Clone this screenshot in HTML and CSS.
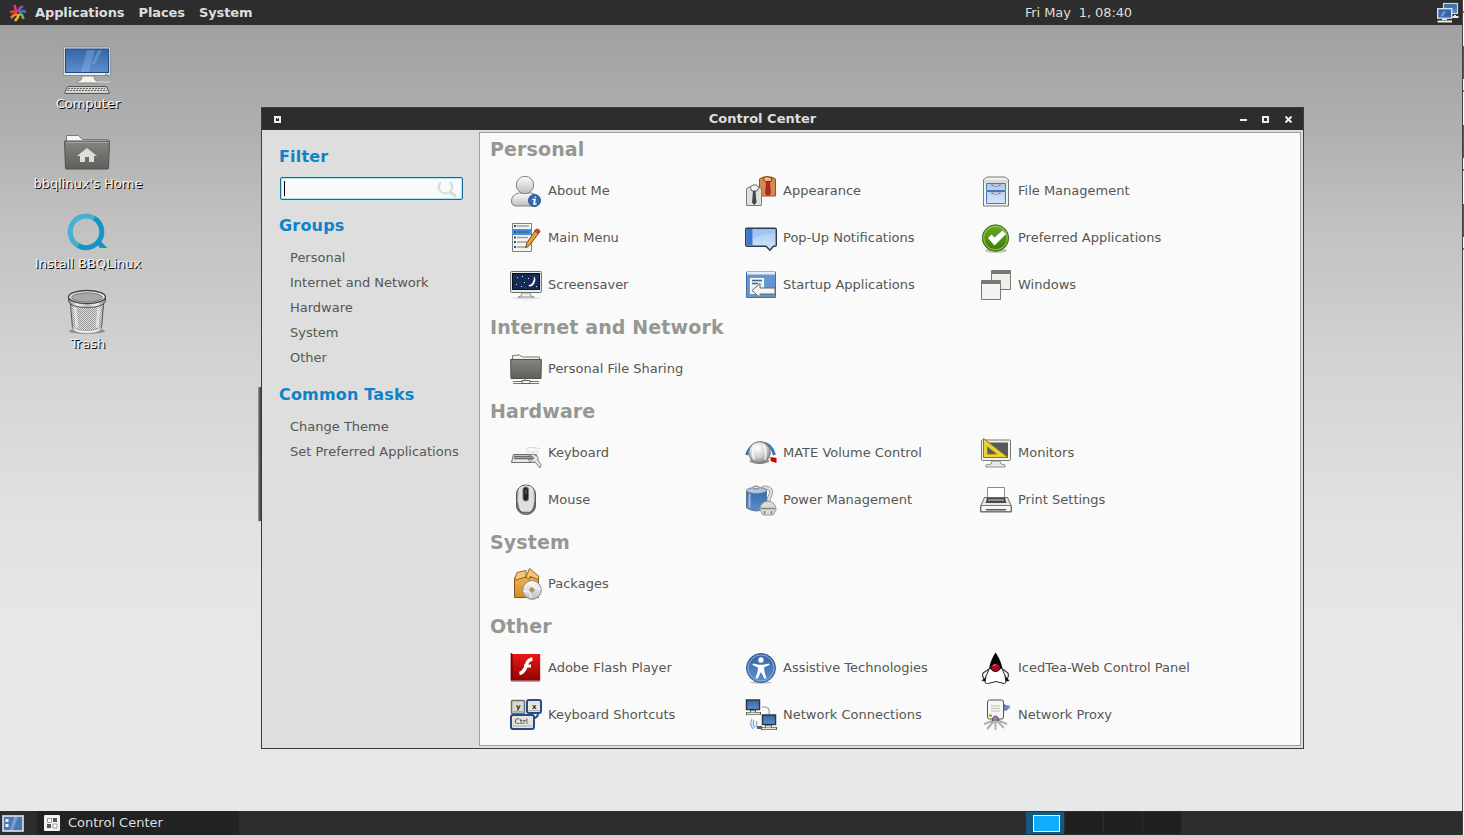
FILE: index.html
```html
<!DOCTYPE html>
<html lang="en">
<head>
<meta charset="utf-8">
<title>Control Center</title>
<link rel="stylesheet" href="styles.css">
</head>
<body>
<svg class="defs" width="0" height="0" aria-hidden="true">
  <defs>
    <linearGradient id="blue" x1="0" y1="0" x2="0" y2="1"><stop offset="0" stop-color="#3465a4"/><stop offset="1" stop-color="#5d8fce"/></linearGradient>
    <linearGradient id="lightblue" x1="0" y1="0" x2="0" y2="1"><stop offset="0" stop-color="#a9c8f0"/><stop offset="1" stop-color="#d3e4f8"/></linearGradient>
    <linearGradient id="steel" x1="0" y1="0" x2="0" y2="1"><stop offset="0" stop-color="#fdfdfd"/><stop offset="1" stop-color="#bdbdbb"/></linearGradient>
    <linearGradient id="metal" x1="0" y1="0" x2="1" y2="0"><stop offset="0" stop-color="#8a8a88"/><stop offset=".25" stop-color="#f4f4f4"/><stop offset=".5" stop-color="#bcbcbc"/><stop offset=".75" stop-color="#f0f0f0"/><stop offset="1" stop-color="#8b8b89"/></linearGradient>
    <radialGradient id="knob" cx=".4" cy=".3" r=".7"><stop offset="0" stop-color="#fff"/><stop offset=".6" stop-color="#cfcfcd"/><stop offset="1" stop-color="#858583"/></radialGradient>
    <linearGradient id="folder" x1="0" y1="0" x2="0" y2="1"><stop offset="0" stop-color="#83857f"/><stop offset="1" stop-color="#5d5f5a"/></linearGradient>
    <linearGradient id="red" x1="0" y1="0" x2="0" y2="1"><stop offset="0" stop-color="#f01515"/><stop offset="1" stop-color="#8e0505"/></linearGradient>
    <linearGradient id="green" x1="0" y1="0" x2="0" y2="1"><stop offset="0" stop-color="#6cab2c"/><stop offset="1" stop-color="#3c7a05"/></linearGradient>
    <linearGradient id="box" x1="0" y1="0" x2="0" y2="1"><stop offset="0" stop-color="#efb04f"/><stop offset="1" stop-color="#d18b28"/></linearGradient>
    <pattern id="mesh" width="2" height="2" patternUnits="userSpaceOnUse"><rect width="2" height="2" fill="#dedede"/><path d="M0 0h1v1H0zM1 1h1v1H1z" fill="#979797"/></pattern>
  </defs>
</svg>

<div class="screen">
  <header class="top-panel">
    <svg class="menu-logo" viewBox="0 0 18 18" fill="none" stroke-width="2.6">
      <path d="M9 8L6.500 5 5.500 1" stroke="#e0397f"/><path d="M10 8l1-4 3-2" stroke="#a14ea8"/>
      <path d="M10 9l4-2 3 1" stroke="#3f75c4"/><path d="M10 10l3 1 1.500 4" stroke="#7db543"/>
      <path d="M9 10l0 3-3 4" stroke="#f5b32f"/><path d="M8 10l-3 1-3 3" stroke="#f07c28"/><path d="M8 9L5 7.500 1 8" stroke="#dc4238"/>
    </svg>
    <nav class="menus"><span>Applications</span><span>Places</span><span>System</span></nav>
    <time class="clock">Fri May&nbsp; 1, 08:40</time>
    <svg class="tray" viewBox="0 0 22 22">
      <path d="M15.500 15h6M18 13v2" stroke="#eee" stroke-width="2"/><rect x="6.500" y="1.500" width="14" height="10" fill="url(#blue)" stroke="#d5d5d0" stroke-width="1.200"/>
      <rect x=".7" y="6.700" width="14" height="9.500" fill="#3465a4" stroke="#dfe9f4" stroke-width="1.300"/><path d="M3 14.500l3-5h3l-3 5z" fill="#6f9ad1"/><path d="M.5 19.500h14.500" stroke="#eee" stroke-width="2"/><path d="M5 17.500h5" stroke="#eee"/>
    </svg>
  </header>

  <main class="desktop">
    <div class="launchers">
      <div class="launcher">
        <svg viewBox="0 0 48 48">
          <rect x=".7" y="1" width="46.600" height="28.500" rx="1" fill="#ebece7" stroke="#888a85"/><rect x="2.500" y="3" width="43" height="23.500" fill="url(#blue)" stroke="#204a87"/>
          <path d="M18 26L24 4h8l-6 22zM29 18L35 4h4l-7 14z" fill="#9bbce5" opacity=".35"/><path d="M42 28.200h3" stroke="#6ca33c"/>
          <path d="M19 30h12l1 4 3 1.500V37H14v-1.500l4-1.500z" fill="#f1f1ee" stroke="#777" stroke-width=".8"/><path d="M34 36h13" stroke="#ddd" fill="none"/>
          <path d="M5 40.500h38l3 5v2H2v-2z" fill="#d3d4d0" stroke="#555753"/><path d="M5 42.500h37M4 44.500h40" stroke="#6b6b69" stroke-dasharray="2 1"/>
        </svg>
        <span>Computer</span>
      </div>
      <div class="launcher">
        <svg viewBox="0 0 48 48">
          <path d="M3.500 15V9.500h12l4 4h25V20h-41z" fill="#f5f5f2" stroke="#777974"/><path d="M1.500 15h45l-1 27q0 1-1 1h-41q-1 0-1-1z" fill="url(#folder)" stroke="#50524e"/>
          <path d="M24 22l10 8h-3v6h-5v-5h-4v5h-5v-6h-3z" fill="#dededb"/><path d="M2.500 16.500h43" stroke="#a3a59f"/>
        </svg>
        <span>bbqlinux's Home</span>
      </div>
      <div class="launcher low">
        <svg viewBox="0 0 48 48" fill="none" stroke-width="5">
          <path d="M15 36.500A15 15 0 1 1 31 9.200" stroke="#47afd2"/><path d="M31 9.200A15 15 0 0 1 15 36.500" stroke="#1095c7"/><path d="M33 34l4 5h7.500l-6-6z" fill="#1095c7"/>
        </svg>
        <span>Install BBQLinux</span>
      </div>
      <div class="launcher low">
        <svg viewBox="0 0 48 48">
          <ellipse cx="24" cy="42" rx="18" ry="3" fill="#555" opacity=".5"/><path d="M7 10l2.500 29q1 5 14.500 5t14.500-5L41 10z" fill="url(#mesh)" stroke="#565656"/>
          <path d="M9.500 37.500q3 4 14.500 4t14.500-4l-.5 3q-3 4-14 4t-14-4z" fill="#f0f0f0" stroke="#888" stroke-width=".6"/><path d="M5.500 7.500v5q3 6 18.500 6t18.500-6v-5z" fill="url(#metal)" stroke="#555"/>
          <ellipse cx="24" cy="8" rx="18.500" ry="6.500" fill="#e9e9e9" stroke="#444" stroke-width="1.300"/><ellipse cx="24" cy="8.500" rx="15.500" ry="4.600" fill="#a8a8a6" stroke="#777"/><path d="M12 18l2 21M36 18l-2 21" stroke="#fff" opacity=".5" stroke-width="3"/>
        </svg>
        <span>Trash</span>
      </div>
    </div>
  </main>

  <footer class="bottom-panel">
    <svg class="show-desktop" viewBox="0 0 22 17"><rect x="1" y="1" width="20" height="15" fill="#4b78b8" stroke="#d8dde2" stroke-width="1.700"/><path d="M8 15L12 2h4L11 15z" fill="#8bacd9" opacity=".7"/><path d="M3.500 4h3v3h-3zM3.500 9h3v3h-3z" fill="#eef3fa"/></svg>
    <div class="task">
      <svg viewBox="0 0 16 16"><rect width="16" height="16" rx="1" fill="#f4f4f1"/><path d="M3.500 3.500h4v4h-4zM9 9h4v4H9z" fill="#fff" stroke="#999"/><path d="M9 3h4v4H9zM3 9h4v4H3z" fill="#555753"/></svg>
      <span>Control Center</span>
    </div>
    <div class="workspaces"><div class="workspace active"><i></i></div><div class="workspace"></div><div class="workspace"></div><div class="workspace"></div></div>
  </footer>
  <div class="edge-strip"></div>

  <div class="hidden-window"></div>
  <section class="window">
    <div class="titlebar">
      <svg class="window-menu" viewBox="0 0 7 7"><path d="M0 0h7v7H0zM2 2v3h3V2z" fill="#eee" fill-rule="evenodd"/><path d="M3 2h1v1H3z" fill="#eee"/></svg>
      <h1>Control Center</h1>
      <div class="controls">
        <svg viewBox="0 0 7 7"><path d="M0 3h7v2H0z" fill="#eee"/></svg>
        <svg viewBox="0 0 7 7"><path d="M0 0h7v7H0zM2 2v3h3V2z" fill="#eee" fill-rule="evenodd"/></svg>
        <svg viewBox="0 0 7 7"><path d="M.5.500l6 6M6.500.500l-6 6" stroke="#eee" stroke-width="2"/></svg>
      </div>
    </div>
    <div class="window-body">
      <aside class="sidebar">
        <h2>Filter</h2>
        <div class="search"><i class="caret"></i><svg viewBox="0 0 22 18" fill="none" stroke="#d5dcdd" stroke-width="2"><path d="M5 2q-3 3-2 6.500 2 5 6.500 5t6.500-5q1-3.500-2-6.500"/><path d="M14 12l6 4.500" stroke-width="3"/></svg></div>
        <h2 class="groups">Groups</h2>
        <ul><li>Personal</li><li>Internet and Network</li><li>Hardware</li><li>System</li><li>Other</li></ul>
        <h2 class="tasks">Common Tasks</h2>
        <ul><li>Change Theme</li><li>Set Preferred Applications</li></ul>
      </aside>
      <div class="content">
        <section class="group">
          <h3>Personal</h3>
          <div class="grid">
            <div class="item"><svg viewBox="0 0 32 32"><path d="M1.500 26q0-6 7-8h13q7 2 7 8 0 5-5 5h-17q-5 0-5-5z" fill="url(#steel)" stroke="#80827d"/><circle cx="15" cy="10" r="8.700" fill="url(#steel)" stroke="#80827d"/><circle cx="24.500" cy="25.500" r="6" fill="#3768b0" stroke="#244f90"/><path d="M25.500 22h.1M23 24.500h2l-1 4.500h2" stroke="#fff" stroke-width="1.600" fill="none" stroke-linecap="round"/></svg><span>About Me</span></div>
            <div class="item"><svg viewBox="0 0 32 32"><path d="M14.500 4l4-2h8l4 2v17h-16z" fill="#d68a4c" stroke="#995018"/><path d="M18 3l4-1.500L27 3l-1 3.500h-6z" fill="#efb781" stroke="#7f4112"/><path d="M21.500 6.500h3l1 12-2.500 2-2.500-2z" fill="#b7252b" stroke="#83171b" stroke-width=".6"/><path d="M1.500 13.500l4-2h6l5 2v17h-15z" fill="#dfe0de" stroke="#7c7f7a"/><path d="M5 12l3-2h3l3 2-2 4H7z" fill="#f4f4f2" stroke="#646661"/><path d="M8 16h2.500l1 11.500L9.300 30 7 27.500z" fill="#44474a"/></svg><span>Appearance</span></div>
            <div class="item"><svg viewBox="0 0 32 32"><path d="M3.500 4.500l4-2.500h17l4 2.500v26.500h-25z" fill="#f1f1ee" stroke="#777b7c"/><path d="M4 5h24v3H4z" fill="#dadcd9"/><path d="M6.500 8.500h19v7h-19zM6.500 16.500h19v12h-19z" fill="url(#lightblue)" stroke="#4b79b5"/><path d="M12 9h8v1.500q-4 1.500-8 0zM12 17h8v1.500q-4 1.500-8 0z" fill="#fff" stroke="#5c6f85" stroke-width=".8"/></svg><span>File Management</span></div>
            <div class="item"><svg viewBox="0 0 32 32"><path d="M2.500 1.500h19v28h-19z" fill="#f5f5f1" stroke="#7e827e"/><path d="M2 7h20v6H2z" fill="#4e8ecc"/><path d="M7 4h12M7 15.500h11M7 20h10M7 25h8" stroke="#9aa1a4" stroke-width="1.300"/><path d="M4 4h2M4 10h2M4 15.500h2M4 20h2M4 25h2" stroke="#24588c" stroke-width="2"/><path d="M7 10h12" stroke="#265d94"/><path d="M15.500 26l1.500-5.500L26 7.500l3.500 2.500-10 13.500z" fill="#e7a33b" stroke="#7a4a12"/><path d="M24.500 9l2-2q3-.5 3.500 2.500l-2 2z" fill="#d2482f" stroke="#7a2114" stroke-width=".6"/></svg><span>Main Menu</span></div>
            <div class="item"><svg viewBox="0 0 32 32"><path transform="translate(0 -1.500)" d="M2 7.700h28q1.300 0 1.300 1.300v15.500q0 1.200-1.300 1.200h-1.500l-3.500 4-4-4H2Q.7 25.700.7 24.500V9q0-1.300 1.300-1.300z" fill="url(#lightblue)" stroke="#2e3b4e" stroke-width="1.400"/><path d="M1.500 7h6v16.500h-6z" fill="#3b78d4"/><path d="M8 16.500q10-5 22-5V7H8z" fill="#9dbfee" opacity=".7"/></svg><span>Pop-Up Notifications</span></div>
            <div class="item"><svg viewBox="0 0 32 32"><ellipse cx="16" cy="28.500" rx="11" ry="2.500" fill="#888" opacity=".5"/><circle cx="15.500" cy="16" r="13.200" fill="url(#green)" stroke="#41750f"/><circle cx="15.500" cy="16" r="11.800" fill="none" stroke="#99ca65"/><path d="M8 16l3.500-3.500 3 3 8-7L26 12 14.500 23.500z" fill="#fff"/></svg><span>Preferred Applications</span></div>
            <div class="item"><svg viewBox="0 0 32 32"><rect x=".6" y="2.500" width="30.800" height="21" rx="1" fill="#ecede8" stroke="#6b6e69"/><rect x="2.500" y="4.500" width="27" height="16" fill="#172b57" stroke="#080e20"/><path d="M24 7q3.500 5-2 10-2 1-4-.5 6-1 6-9.500z" fill="#f3f7ff"/><path d="M7 8h1v1H7zM12 7h1v1h-1zM6 15h1v1H6zM14 13h1v1h-1zM18 9h1v1h-1zM11 17h1v1h-1zM26 17h1v1h-1z" fill="#d4e3ff"/><ellipse cx="16" cy="29" rx="14" ry="1.500" fill="#bbb" opacity=".4"/><path d="M12 24h8l1 3 3 1H8l3-1z" fill="#eee" stroke="#7d807a" stroke-width=".8"/></svg><span>Screensaver</span></div>
            <div class="item"><svg viewBox="0 0 32 32"><path d="M1.500 3h29v25.500h-29z" fill="#6596d0" stroke="#436fa5"/><path d="M2 3h28v2.500H2z" fill="#e8eef4"/><path d="M5.500 9.500h13v15h-13z" fill="#e9eff7" stroke="#fff"/><path d="M7 11.500h10M7 14.500h6" stroke="#41658e" stroke-width="1.300"/><path d="M7 21.500l8-7v4.500h15v6H15v3.500z" fill="#f5f6f2" stroke="#686a66"/></svg><span>Startup Applications</span></div>
            <div class="item"><svg viewBox="0 0 32 32"><path d="M11.500 1.500h19v19h-19z" fill="#eeeeec" stroke="#777a75"/><path d="M12 2h18v3H12z" fill="#777974"/><path d="M1.500 11.500h19v19h-19z" fill="#f3f3f1" stroke="#777a75"/><path d="M2 12h18v3H2z" fill="#777974"/></svg><span>Windows</span></div>
          </div>
        </section>
        <section class="group">
          <h3>Internet and Network</h3>
          <div class="grid">
            <div class="item"><svg viewBox="0 0 32 32"><path d="M2.500 8V2.500l7-.5 3 2h17V8z" fill="#f2f2ef" stroke="#777974"/><path d="M.6 6.500h30.800L31 25.500H1z" fill="url(#folder)" stroke="#50524e"/><path d="M3 28.500h26M3 30.500h26M15 26v3" stroke="#777974"/><path d="M12 27.500h8v3h-8z" fill="#f4f4f2" stroke="#60625e"/></svg><span>Personal File Sharing</span></div>
          </div>
        </section>
        <section class="group">
          <h3>Hardware</h3>
          <div class="grid">
            <div class="item"><svg viewBox="0 0 32 32"><path d="M17 13q-2-3 5-2.500t8 1.500M16 15h13" stroke="#d5d5d3" fill="none"/><path d="M3.500 17.500h23l2 8h-27z" fill="#e9e9e7" stroke="#696b67"/><path d="M4 19.500h20M4 21.500h19" stroke="#696b67" stroke-width="1.500"/><path d="M19 18.500q4-3 7 0 3 2 2 5l3 4-1 3.500-5-6q-6 1-7-3l4 1 2-2-2-2z" fill="#e2e2e0" stroke="#898a87"/></svg><span>Keyboard</span></div>
            <div class="item"><svg viewBox="0 0 32 32"><path d="M1.500 18Q6 6 16 6q10 0 13.500 12" fill="none" stroke="#3e74b6" stroke-width="3"/><path d="M25.500 20l6 1v5l-6-2z" fill="#d40000"/><ellipse cx="14.500" cy="24" rx="10" ry="3" fill="#999"/><circle cx="14.500" cy="15.500" r="10.800" fill="url(#knob)" stroke="#777976"/><path d="M9 8q-2 8 0 15M19 8q3 7 1 15" stroke="#fff" stroke-width="2" fill="none" opacity=".7"/></svg><span>MATE Volume Control</span></div>
            <div class="item"><svg viewBox="0 0 32 32"><rect x="1.500" y="3" width="29" height="20.500" rx="1" fill="#f2f3ee" stroke="#777974"/><rect x="4" y="5.500" width="24" height="15" fill="#555a5d"/><path d="M12 24h8l1 3 4 1v2H6v-2l5-1z" fill="#e9e9e7" stroke="#777" stroke-width=".8"/><path d="M3.500 1.500v19h24.500zM7.500 10v7h9z" fill="#ead03a" fill-rule="evenodd" stroke="#967a0b"/></svg><span>Monitors</span></div>
            <div class="item"><svg viewBox="0 0 32 32"><rect x="6.500" y="1" width="19" height="29.500" rx="9" fill="url(#metal)" stroke="#555753"/><path d="M9 4q7-5 14 0l1 14q-3 9-8 9t-8-9z" fill="#dededc"/><path d="M7 18q0 11 9 11t9-11" fill="none" stroke="#60625e" stroke-width="1.600"/><rect x="13" y="3" width="5.500" height="14" rx="2.600" fill="#222" stroke="#777"/><path d="M16 5v5" stroke="#777"/></svg><span>Mouse</span></div>
            <div class="item"><svg viewBox="0 0 32 32"><path d="M15 9q2-7 8-5 5 2 2 8-3 5 0 7" fill="none" stroke="#8b8e89" stroke-width="4"/><path d="M15 9q2-7 8-5 5 2 2 8-3 5 0 7" fill="none" stroke="#ddd" stroke-width="2.500"/><path d="M1.500 6.500q10-5 20 0V24q-10 6-20 0z" fill="url(#blue)" stroke="#5b7896"/><ellipse cx="11.500" cy="6.500" rx="10" ry="3" fill="#aec7e3" stroke="#6b8199"/><ellipse cx="11" cy="3.500" rx="3" ry="1.500" fill="#ddd" stroke="#777"/><path d="M4.500 9.500v14" stroke="#9dbbe0" stroke-width="2"/><path d="M15 26q0-8 8-9 8 1 8 9l-3 5H18z" fill="#dadad7" stroke="#969894"/><path d="M16 24.500h14M19.500 27v3M26.500 27v3" stroke="#858783" stroke-width="1.500"/></svg><span>Power Management</span></div>
            <div class="item"><svg viewBox="0 0 32 32"><path d="M7.500 3.500h17v12h-17z" fill="#fff" stroke="#898b87"/><path d="M4.500 13.500h23l4 9V28h-31v-5.500z" fill="#e8e8e5" stroke="#686a66"/><path d="M7 14h18l1.500 5h-21z" fill="#474a48"/><path d="M8 16h16" stroke="#899195" stroke-width="2"/><path d="M1 21.500h30v6H1z" fill="#f8f8f5" stroke="#777"/><path d="M6 25h20v1.500H6z" fill="#555"/></svg><span>Print Settings</span></div>
          </div>
        </section>
        <section class="group">
          <h3>System</h3>
          <div class="grid">
            <div class="item"><svg viewBox="0 0 32 32"><path d="M4.500 9.500h24v20h-24z" fill="url(#box)" stroke="#865515"/><path d="M4.500 11L7 4.500l9-2V9l-10 3zM16 9l3.500-8.500L29 8.500l-1 3-8-3-1 3z" fill="#f5c47d" stroke="#9a641d"/><circle cx="22" cy="22" r="9.300" fill="url(#steel)" stroke="#888a85"/><path d="M22 13l2 7 7 1M13 23l7 1 1 6" stroke="#fff" stroke-width="1.500" fill="none" opacity=".7"/><circle cx="22" cy="22" r="2.200" fill="#c79248" stroke="#999"/></svg><span>Packages</span></div>
          </div>
        </section>
        <section class="group">
          <h3>Other</h3>
          <div class="grid">
            <div class="item"><svg viewBox="0 0 32 32"><path d="M1 29h29" stroke="#aaa" stroke-width="2"/><path d="M.8 1l1.700 1h27.700v26.500H.8z" fill="url(#red)"/><path d="M.8 1l1.700 1v25L.8 28.500z" fill="#650707"/><path d="M22.500 7Q18 7.500 16.500 12.500q-2 8-7 9" stroke="#fff" stroke-width="3.400" fill="none"/><path d="M14 14h7" stroke="#fff" stroke-width="3"/></svg><span>Adobe Flash Player</span></div>
            <div class="item"><svg viewBox="0 0 32 32"><ellipse cx="16" cy="30.500" rx="11" ry="1.200" fill="#bbb"/><circle cx="16" cy="16" r="14.500" fill="url(#blue)" stroke="#365d92"/><circle cx="16" cy="16" r="13" fill="none" stroke="#85aedf"/><circle cx="16" cy="8" r="2.700" fill="#fff"/><path d="M8 11.500l6 1.300h4l6-1.300.5 1.500-5.500 2.500.5 4.500 2 6-2 .7L16 20l-3.500 6.700-2-.7 2-6 .5-4.500L7.500 13z" fill="#fff"/></svg><span>Assistive Technologies</span></div>
            <div class="item"><svg viewBox="0 0 32 32"><path d="M9 17l-6 4-.5 3L4 27 2 29M22.500 17l5.500 4 .5 3-1.500 3 2 2" stroke="#333" fill="none" stroke-width="1.200"/><path d="M7 22l-4 7 3 .5zM24.500 22l4 7-3 .5z" fill="#000"/><path d="M15.500.500Q10.500 8 9 17h13.500Q21 8 15.500.500z" fill="#000"/><path d="M9.500 16.500h12.500q4 8 4 13.500-1 3-4 1-6-3-12 0-4 2-5-1 0-6 4.500-13.500z" fill="#fff" stroke="#222"/><ellipse cx="15.500" cy="15.500" rx="4.800" ry="4" fill="#a60f2b" stroke="#300"/><path d="M13 14q1-2 3-1" stroke="#e9929e" fill="none"/></svg><span>IcedTea-Web Control Panel</span></div>
            <div class="item"><svg viewBox="0 0 32 32"><rect x="1.500" y="1.500" width="13" height="13" rx="1" fill="#d7d9d2" stroke="#6c706a" stroke-width="1.500"/><path d="M28 14q0 5-5 5" stroke="#264b87" stroke-width="2" fill="none"/><rect x="17" y="1" width="14" height="13" rx="2" fill="#e4e5df" stroke="#264b87" stroke-width="2"/><rect x="1" y="16" width="23" height="14" rx="2" fill="#e4e5df" stroke="#264b87" stroke-width="2"/><path d="M3 27h19M19 11.500h10M3 12.500h10" stroke="#aaa"/><text x="6" y="10" class="key">y</text><text x="22" y="10" class="key">x</text><text x="4.500" y="24.500" class="key wide">Ctrl</text></svg><span>Keyboard Shortcuts</span></div>
            <div class="item"><svg viewBox="0 0 32 32"><path d="M17 8q9-1 7 8M9 21q-2 4 1 8M7 20q-3 5 1 10M12 22q-1 3 0 6" stroke="#83ade0" stroke-width="1.300" fill="none"/><rect x="1.500" y="1" width="13" height="9.500" fill="url(#blue)" stroke="#303a3e" stroke-width="1.500"/><path d="M1 14.500h15M5 12.500h6" stroke="#5c605b" stroke-width="3"/><path d="M2 14.500h13M6 12.500h4" stroke="#e5e5d8" stroke-width="1.300"/><rect x="17.500" y="16" width="13" height="9.500" fill="url(#blue)" stroke="#303a3e" stroke-width="1.500"/><path d="M16 29.500h16M20 27.500h7M12 28.500h5" stroke="#5c605b" stroke-width="3"/><path d="M17 29.500h14M21 27.500h5" stroke="#e5e5d8" stroke-width="1.300"/></svg><span>Network Connections</span></div>
            <div class="item"><svg viewBox="0 0 32 32"><path d="M15 21L4 25M15 21L7 30M15.500 21v10M16 21l8 8M17 21l10 4" stroke="#b1b1af" stroke-width="2"/><rect x="7.500" y="1" width="16" height="19" rx="2" fill="#f7f7f4" stroke="#50524e"/><path d="M11 7h9M11 9.500h9M11 12h9" stroke="#babdb6"/><path d="M24 5v6h3V9h3M24 7h6" fill="#769bd1" stroke="#4b6792"/><circle cx="10.500" cy="16.500" r="1.500" fill="#73b72d"/><path d="M12.500 22q0-5 3-5t3 5" fill="#997da0" stroke="#584260"/></svg><span>Network Proxy</span></div>
          </div>
        </section>
      </div>
    </div>
  </section>
</div>
</body>
</html>
```
FILE: styles.css
```css
* { box-sizing: border-box; }

body {
  margin: 0;
  font: 13px/20px "DejaVu Sans", sans-serif;
  color: #555753;
  overflow: hidden;
}

h1, h2, h3, ul { margin: 0; padding: 0; }
svg { display: block; flex: none; }
.defs { position: absolute; }

.screen {
  position: relative;
  display: flex;
  flex-direction: column;
  width: 1464px;
  height: 837px;
  background: #d2d2d0;
}

/* Panels */
.top-panel {
  display: flex;
  align-items: center;
  height: 25px;
  width: 1462px;
  background: #2d2d2d;
  color: #dedede;
  font-weight: bold;
  padding: 0 3px 0 9px;
}
.menu-logo { width: 18px; height: 18px; }
.menus { display: flex; gap: 14px; margin-left: 8px; letter-spacing: -0.1px; }
.clock { margin-left: auto; margin-right: 305px; font-weight: normal; letter-spacing: -0.1px; }
.tray { width: 22px; height: 22px; }

.bottom-panel {
  display: flex;
  align-items: center;
  height: 24px;
  width: 1462px;
  background: #2d2d2d;
  padding-left: 2px;
}
.show-desktop { width: 22px; height: 17px; }
.task {
  display: flex;
  align-items: center;
  gap: 8px;
  width: 202px;
  height: 24px;
  margin-left: 13px;
  padding-left: 7px;
  background: #222;
  color: #dedede;
}
.task svg { width: 16px; height: 16px; }
.workspaces { display: flex; gap: 1px; margin-left: 787px; height: 22px; }
.workspace { width: 38px; background: #202020; }
.workspace.active { display: grid; place-items: center; padding-left: 2px; background: #145a80; }
.workspace.active i { width: 27px; height: 17px; background: #10adff; border: 1px solid #fff; }

/* Desktop */
.desktop {
  width: 1462px;
  height: 786px;
  background: linear-gradient(#a0a0a0 0, #b2b2b2 120px, #c1c1c1 200px, #d4d4d4 345px, #e2e2e2 500px, #e8e8e8 620px, #e8e8e8 100%);
}
.launchers { width: 176px; padding-top: 21px; }
.launcher { display: flex; flex-direction: column; align-items: center; height: 80px; color: #f4f4f4; }
.launcher svg { width: 48px; height: 48px; margin-right: 2px; }
.launcher.low svg { height: 51px; padding-top: 3px; margin-bottom: -3px; }
.launcher span { text-shadow: 1px 1px 0 #000; }

.edge-strip {
  position: absolute;
  top: 0;
  right: 0;
  width: 2px;
  height: 835px;
  border-left: 1px solid #444;
  background: repeating-linear-gradient(#fff 0 11px, #777 11px 13px, #fff 13px 46px, #555 46px 79px) top / 100% 250px no-repeat #f4f4f4;
}

/* Window */
.hidden-window {
  position: absolute;
  left: 258px;
  top: 387px;
  width: 3px;
  height: 134px;
  background: linear-gradient(90deg, #999, #333);
}
.window {
  position: absolute;
  left: 261px;
  top: 107px;
  width: 1043px;
  height: 642px;
  border: 1px solid #3b3b3b;
  background: #dedede;
}
.titlebar {
  display: flex;
  align-items: center;
  height: 22px;
  padding: 0 11px 0 12px;
  background: #2d2d2d;
  color: #dedede;
}
.window-menu { width: 7px; height: 7px; }
.titlebar h1 { flex: 1; padding-left: 4px; font-size: 13px; line-height: 20px; text-align: center; }
.controls { display: flex; gap: 16px; }
.controls svg { width: 7px; height: 7px; }
.controls svg:first-child { margin-right: -1px; }
.window-body { display: flex; height: 618px; padding: 2px 2px 2px 0; }

.sidebar { width: 217px; padding: 15px 16px 0 17px; }
.sidebar h2 { font-size: 16px; line-height: 20px; letter-spacing: 0.18px; color: #0f82c6; }
.sidebar ul { list-style: none; margin-left: 11px; }
.sidebar li { height: 25px; line-height: 25px; white-space: nowrap; }
.search {
  display: flex;
  align-items: center;
  justify-content: space-between;
  width: 183px;
  height: 23px;
  margin: 10px 0 16px 1px;
  padding: 0 4px 0 2px;
  border: 1px solid #156b9b;
  border-radius: 2px;
  background: #fafafa;
  box-shadow: inset 0 0 0 1px #a9e4fa;
}
.search svg { width: 22px; height: 18px; }
.caret { width: 1px; height: 15px; margin-left: 1px; background: #000; }
.sidebar .groups { margin-bottom: 9px; }
.sidebar .tasks { margin: 15px 0 9px; }

.content { flex: 1; border: 1px solid #a0a0a0; background: #fafafa; }
.group { padding-bottom: 3px; }
.group h3 { padding: 0 0 2px 10px; height: 34px; font-size: 19px; line-height: 32px; letter-spacing: 0.13px; color: #959793; }
.grid { display: grid; grid-template-columns: repeat(3, 235px); grid-auto-rows: 47px; padding-left: 30px; }
.item { display: flex; align-items: center; gap: 6px; white-space: nowrap; }
.item svg { width: 32px; height: 32px; }
.key { font: bold 7px "DejaVu Sans", sans-serif; fill: #26292a; }
.key.wide { font-weight: normal; font-size: 7.5px; }
```
